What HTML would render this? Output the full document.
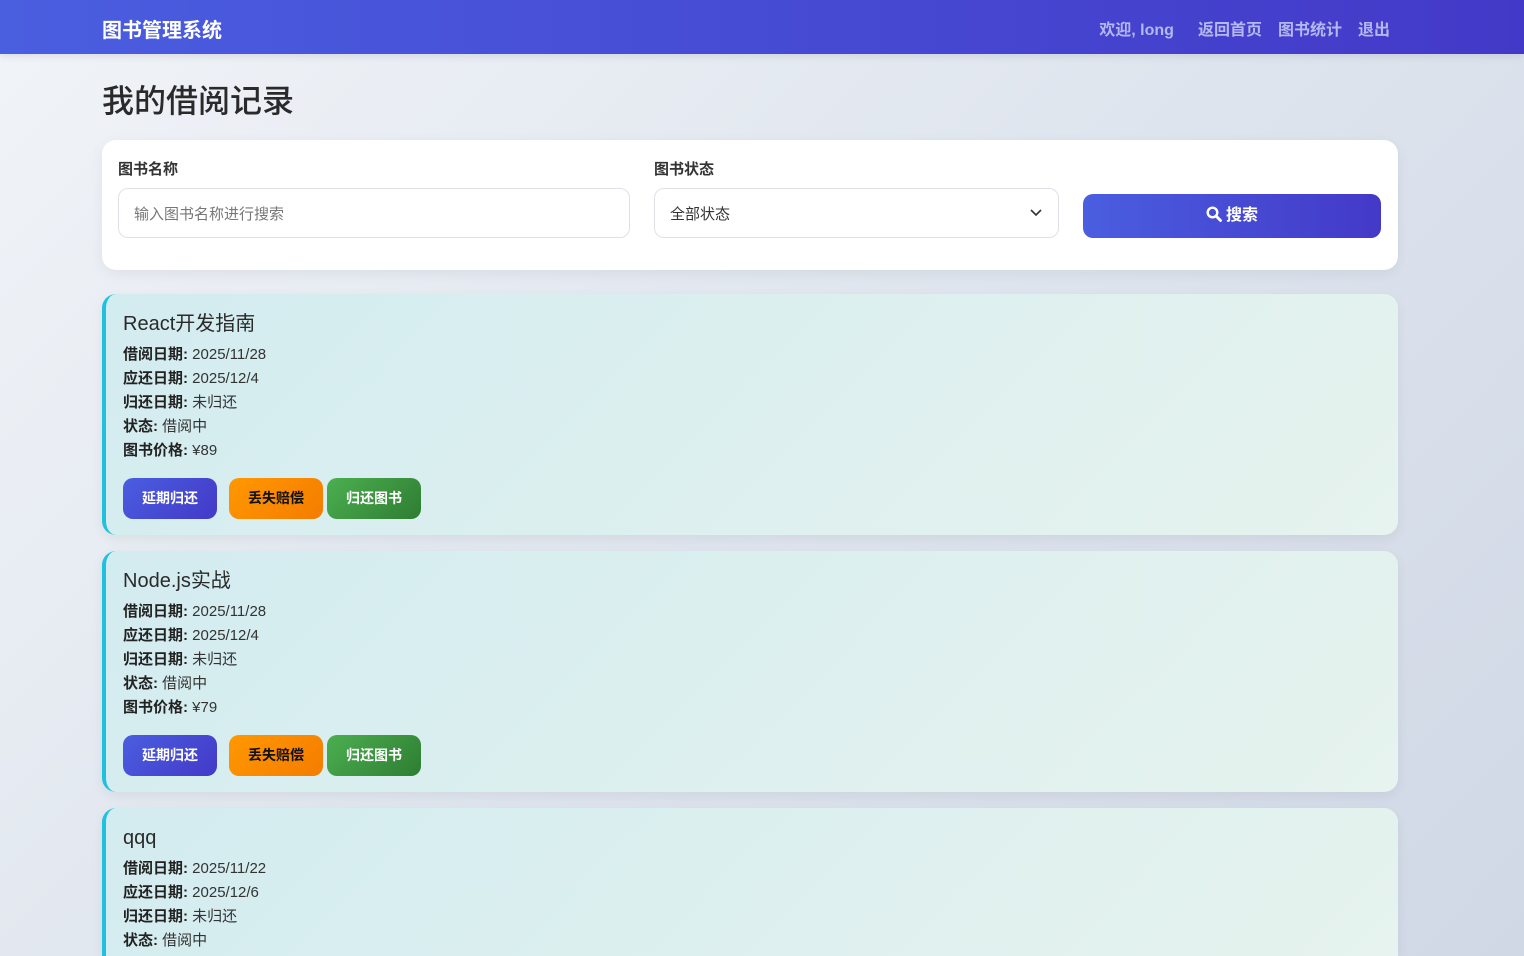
<!DOCTYPE html>
<html style="width:1524px;height:956px;overflow:hidden"><head><meta charset="utf-8"><style>
*{box-sizing:border-box;margin:0;padding:0}
body{width:1524px;height:956px;overflow:hidden;position:relative;font-family:"Liberation Sans","Noto Sans CJK SC",sans-serif;background:linear-gradient(135deg,#f1f4f8 0%,#dfe5ee 50%,#d0d8e6 100%);color:#222}
.nav{height:54px;background:linear-gradient(90deg,#4a5ee0,#4339c8);position:relative;box-shadow:0 2px 8px rgba(0,0,0,.1)}
.logo{position:absolute;left:102px;top:14px;color:#fff;font-size:20px;font-weight:bold}
.links{position:absolute;right:134px;top:16px;color:#b4b8f0;font-size:16px;font-weight:bold}
.links span{margin-left:13px}
h1{position:absolute;left:102px;top:76px;font-size:32px;font-weight:500;color:#2a2a2a}
.search{position:absolute;left:102px;top:140px;width:1296px;height:130px;background:#fff;border-radius:14px;box-shadow:0 4px 14px rgba(0,0,0,.06)}
.lbl{position:absolute;top:18px;font-size:15px;font-weight:bold;color:#333}
.inp{position:absolute;top:48px;height:50px;border:1px solid #dde1e6;border-radius:10px;font-size:15px;padding:14px 15px;color:#666}
.btn{position:absolute;left:981px;top:54px;width:298px;height:44px;border-radius:10px;background:linear-gradient(90deg,#4a5ee0,#4339c8);color:#fff;font-weight:bold;font-size:16px;text-align:center;line-height:44px}
.card{position:absolute;left:102px;width:1296px;height:241px;border-radius:14px;border-left:4px solid #1fc1de;background:linear-gradient(135deg,#d3ecf0,#e6f3ee);box-shadow:0 4px 12px rgba(0,0,0,.06);padding:17px 0 0 17px;overflow:hidden}
.t{font-size:20px;color:#2a2a2a;margin-bottom:6px;line-height:26px}
.l{font-size:15px;line-height:24px;color:#333}
.l b{color:#222}
.bs{position:absolute;left:17px;top:184px;display:flex}
.b{width:94px;height:41px;border-radius:10px;font-size:14px;font-weight:bold;text-align:center;line-height:41px;color:#fff}
</style></head><body>
<div class="nav"><div class="logo">图书管理系统</div><div class="links"><span>欢迎, long</span><span style="margin-left:24px">返回首页</span><span style="margin-left:16px">图书统计</span><span style="margin-left:16px">退出</span></div></div>
<h1>我的借阅记录</h1>
<div class="search">
<div class="lbl" style="left:16px">图书名称</div>
<div class="inp" style="left:16px;width:512px;color:#777">输入图书名称进行搜索</div>
<div class="lbl" style="left:552px">图书状态</div>
<div class="inp" style="left:552px;width:405px;color:#333">全部状态<svg style="position:absolute;right:16px;top:20px" width="12" height="8" viewBox="0 0 12 8"><path d="M1 1l5 5 5-5" fill="none" stroke="#333" stroke-width="1.6"/></svg></div>
<div class="btn"><svg width="16" height="16" viewBox="0 0 16 16" style="vertical-align:-2px;margin-right:4px"><circle cx="6.5" cy="6.5" r="4.8" fill="none" stroke="#fff" stroke-width="2.4"/><path d="M10 10l4.5 4.5" stroke="#fff" stroke-width="2.8" stroke-linecap="round"/></svg>搜索</div>
</div>
<div class="card" style="top:294px"><div class="t">React开发指南</div>
<div class="l"><b>借阅日期:</b> 2025/11/28</div><div class="l"><b>应还日期:</b> 2025/12/4</div><div class="l"><b>归还日期:</b> 未归还</div><div class="l"><b>状态:</b> 借阅中</div><div class="l"><b>图书价格:</b> ¥89</div>
<div class="bs"><div class="b" style="background:linear-gradient(135deg,#4a5ee0,#4339c8)">延期归还</div><div class="b" style="margin-left:12px;background:linear-gradient(135deg,#ff9800,#f57c00);color:#111">丢失赔偿</div><div class="b" style="margin-left:4px;background:linear-gradient(135deg,#4caf50,#2e7d32)">归还图书</div></div></div>
<div class="card" style="top:551px"><div class="t">Node.js实战</div>
<div class="l"><b>借阅日期:</b> 2025/11/28</div><div class="l"><b>应还日期:</b> 2025/12/4</div><div class="l"><b>归还日期:</b> 未归还</div><div class="l"><b>状态:</b> 借阅中</div><div class="l"><b>图书价格:</b> ¥79</div>
<div class="bs"><div class="b" style="background:linear-gradient(135deg,#4a5ee0,#4339c8)">延期归还</div><div class="b" style="margin-left:12px;background:linear-gradient(135deg,#ff9800,#f57c00);color:#111">丢失赔偿</div><div class="b" style="margin-left:4px;background:linear-gradient(135deg,#4caf50,#2e7d32)">归还图书</div></div></div>
<div class="card" style="top:808px;height:148px;border-radius:14px 14px 0 0"><div class="t">qqq</div>
<div class="l"><b>借阅日期:</b> 2025/11/22</div><div class="l"><b>应还日期:</b> 2025/12/6</div><div class="l"><b>归还日期:</b> 未归还</div><div class="l"><b>状态:</b> 借阅中</div></div>
</body></html>
